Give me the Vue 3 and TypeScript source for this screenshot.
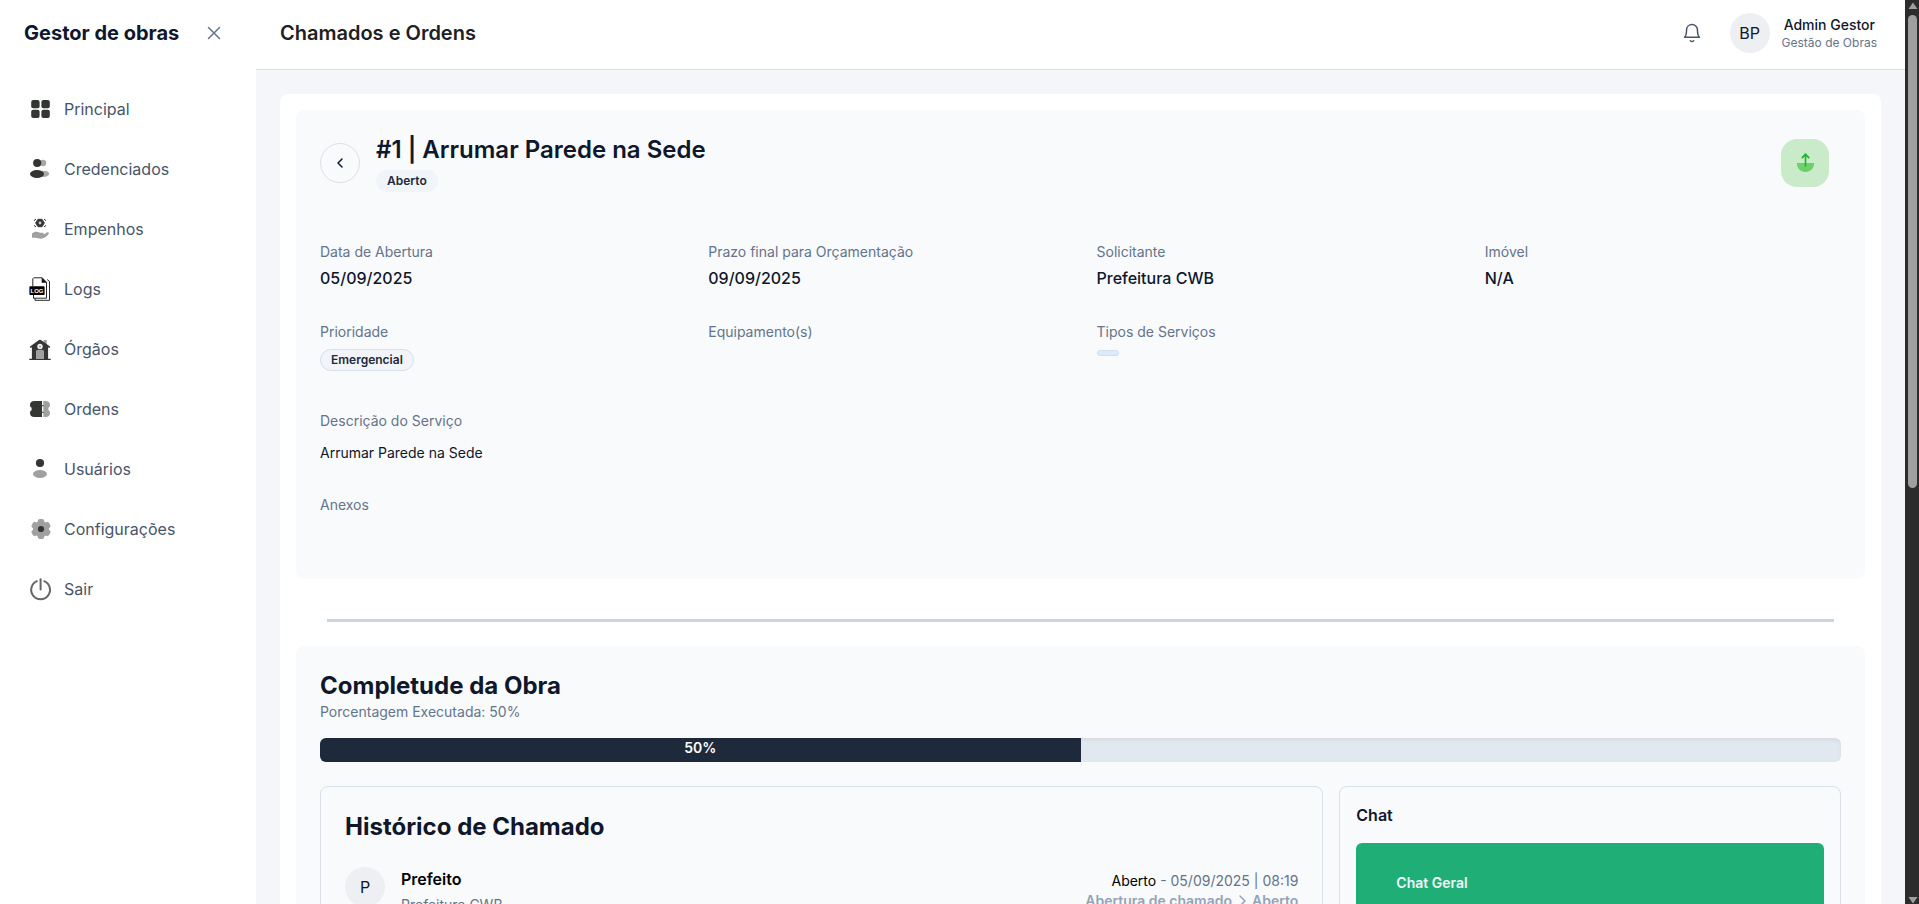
<script setup lang="ts">
import { ref } from 'vue'

interface NavItem {
  icon: string
  label: string
}

interface Field {
  label: string
  value?: string
  badge?: string
  chip?: boolean
}

const navItems: NavItem[] = [
  { icon: 'grid', label: 'Principal' },
  { icon: 'people', label: 'Credenciados' },
  { icon: 'hand', label: 'Empenhos' },
  { icon: 'log', label: 'Logs' },
  { icon: 'house', label: 'Órgãos' },
  { icon: 'ticket', label: 'Ordens' },
  { icon: 'user', label: 'Usuários' },
  { icon: 'gear', label: 'Configurações' },
  { icon: 'power', label: 'Sair' },
]

const fields: Field[] = [
  { label: 'Data de Abertura', value: '05/09/2025' },
  { label: 'Prazo final para Orçamentação', value: '09/09/2025' },
  { label: 'Solicitante', value: 'Prefeitura CWB' },
  { label: 'Imóvel', value: 'N/A' },
  { label: 'Prioridade', badge: 'Emergencial' },
  { label: 'Equipamento(s)' },
  { label: 'Tipos de Serviços', chip: true },
]

const progress = ref<number>(50)
const gearAngles: number[] = [0, 60, 120, 180, 240, 300]
</script>

<template>
  <div class="shell">
    <aside class="sidebar">
      <div class="brand">
        <span class="brand-name">Gestor de obras</span>
        <button class="icon-button" type="button" aria-label="Fechar menu">
          <svg width="14" height="14" viewBox="0 0 14 14" fill="none" stroke="#64748b" stroke-width="1.5" stroke-linecap="round">
            <path d="M1.5 1.5 12.5 12.5M12.5 1.5 1.5 12.5" />
          </svg>
        </button>
      </div>
      <nav class="nav">
        <a v-for="item in navItems" :key="item.label" class="nav-link" href="#">
          <svg class="nav-icon" viewBox="0 0 24 24" fill="none" aria-hidden="true">
            <g v-if="item.icon === 'grid'" fill="#343633">
              <rect x="3.2" y="3" width="8.4" height="8.2" rx="2" />
              <rect x="13.4" y="3" width="8.4" height="8.2" rx="2" />
              <rect x="3.2" y="12.8" width="8.4" height="8.2" rx="2" />
              <rect x="13.4" y="12.8" width="8.4" height="8.2" rx="2" />
            </g>
            <g v-else-if="item.icon === 'people'">
              <circle cx="15" cy="6" r="3.2" fill="#a8a8a8" />
              <ellipse cx="15.4" cy="16.8" rx="5.8" ry="3.1" fill="#a8a8a8" />
              <circle cx="9.2" cy="6" r="4.1" fill="#343633" />
              <ellipse cx="9" cy="17" rx="7" ry="4" fill="#343633" />
            </g>
            <g v-else-if="item.icon === 'hand'">
              <path d="M10 2.300h4l2.300 3.700-2.300 3.700h-4L7.700 6z" fill="#343633" stroke="#343633" stroke-width="1" stroke-linejoin="round" />
              <circle cx="12" cy="6" r="1.4" fill="#c9c9c9" />
              <path d="M8 2.3Q6.4 2.5 6.4 3.8M16 2.3q1.6.2 1.6 1.5M8 9.7Q6.4 9.5 6.4 8.2M16 9.7q1.6-.2 1.6-1.5" stroke="#343633" stroke-width="1" />
              <path d="M4 16.6c2.2-2.2 5-2.4 7.4-1 1 .5 2.6 0 3.6.4.8.3 1 .9.8 1.5l3-1.9c1.4-.8 2.8.2 1.8 1.5-1.8 2.6-4.4 4.6-8 4.6-2.2 0-3-.9-5-.9H4z" fill="#a0a0a0" />
            </g>
            <g v-else-if="item.icon === 'log'">
              <path d="M7 18v5.3h14.500V4.400l-2.300-1.900" stroke="#111" stroke-width=".9" stroke-linejoin="round" />
              <path d="M5.500 18v3.200h13V5.200L14.200.8H5.800L4.800 1.800v7.500" fill="#fff" stroke="#111" stroke-width=".9" stroke-linejoin="round" />
              <path d="M13.700.6v5.200h5.200z" fill="#111" />
              <rect x="1.400" y="9.200" width="15.200" height="8.800" rx=".8" fill="#000" />
              <text class="log-text" x="9" y="15.900" text-anchor="middle">LOG</text>
            </g>
            <g v-else-if="item.icon === 'house'">
              <path d="M15.6 3h3.2v6h-3.2z" fill="#a0a0a0" />
              <path d="M12 2.8c.5 0 .9.2 1.3.5l9 6.5-.9 1.2-1.3-.8v11.6h2.6v1.2H1.3v-1.2h2.6V10.2L2.6 11l-.9-1.2 9-6.5c.4-.3.8-.5 1.3-.5z" fill="#343633" />
              <circle cx="12" cy="9.4" r="2.7" fill="#f1f1f1" />
              <circle cx="12" cy="9.4" r="1" fill="#a0a0a0" />
              <path d="M8 22v-7.4c0-1 .8-1.8 1.8-1.8h4.4c1 0 1.8.8 1.8 1.8V22z" fill="#a0a0a0" />
            </g>
            <g v-else-if="item.icon === 'ticket'">
              <path d="M15 4h2.600C20.400 4 22 5.200 22 8c0 1.500-.6 2.300-1.600 2.800v2.400c1 .5 1.600 1.300 1.600 2.800 0 2.800-1.600 4-4.400 4H15z" fill="#a0a0a0" />
              <path d="M14.200 4H6.400C3.600 4 2 5.200 2 8c0 1.500.5 2.300 1.600 2.800v2.400C2.500 13.700 2 14.500 2 16c0 2.800 1.600 4 4.400 4h7.800z" fill="#343633" />
              <path d="M14.700 4v16" stroke="#fff" stroke-width="1.200" />
              <path d="M13.600 8.700h2.200M13.600 15.300h2.200" stroke="#5c5c5c" stroke-width="1.200" />
            </g>
            <g v-else-if="item.icon === 'user'">
              <circle cx="12" cy="6" r="4.1" fill="#343633" />
              <ellipse cx="12" cy="17" rx="7" ry="4" fill="#a0a0a0" />
            </g>
            <g v-else-if="item.icon === 'gear'">
              <circle cx="13" cy="12" r="8" fill="#a0a0a0" />
              <rect
                v-for="angle in gearAngles"
                :key="angle"
                x="9.800"
                y="2"
                width="6.400"
                height="5"
                rx="2"
                fill="#a0a0a0"
                :transform="`rotate(${angle} 13 12)`"
              />
              <circle cx="13" cy="12" r="3.100" fill="#343633" />
            </g>
            <g v-else stroke="#666" stroke-width="2" stroke-linecap="round">
              <path d="M8.900 4.200a9.400 9.400 0 1 0 7.400 0" />
              <path d="M12.600 2.200v10.400" />
            </g>
          </svg>
          <span>{{ item.label }}</span>
        </a>
      </nav>
    </aside>

    <div class="content">
      <header class="topbar">
        <h1 class="page-title">Chamados e Ordens</h1>
        <div class="account">
          <button class="icon-button" type="button" aria-label="Notificações">
            <svg width="24" height="24" viewBox="0 0 24 24" fill="none" stroke="#475569" stroke-width="1.5" stroke-linecap="round" stroke-linejoin="round">
              <path d="M4.600 16.200h14.800c-1.300-1.300-1.900-3.200-1.900-5.700V9.200C17.500 6 15.200 3.600 12 3.600S6.500 6 6.500 9.200v1.300c0 2.500-.6 4.400-1.900 5.700z" />
              <path d="M10.300 19.700q1.700 1.500 3.400 0" />
            </svg>
          </button>
          <div class="profile">
            <span class="avatar">BP</span>
            <div class="profile-text">
              <span class="profile-name">Admin Gestor</span>
              <span class="profile-org">Gestão de Obras</span>
            </div>
          </div>
        </div>
      </header>

      <main class="main">
        <div class="sheet">
          <section class="card details">
            <div class="details-head">
              <button class="back" type="button" aria-label="Voltar">
                <svg width="16" height="16" viewBox="0 0 16 16" fill="none" stroke="#0f172a" stroke-width="1.5" stroke-linecap="round" stroke-linejoin="round">
                  <path d="M10 4 6 8l4 4" />
                </svg>
              </button>
              <div class="details-title">
                <h2>#1 | Arrumar Parede na Sede</h2>
                <span class="badge badge-plain">Aberto</span>
              </div>
              <button class="upload" type="button" aria-label="Enviar">
                <svg width="24" height="24" viewBox="0 0 24 24" fill="none">
                  <path d="M3.800 12h17.400c0 5.200-3.500 8.900-8.700 8.900S3.800 17.200 3.800 12z" fill="#6fd06b" />
                  <path d="M12.500 15V3.600M9.300 6.600l3.200-3.400 3.200 3.400" stroke="#22b52a" stroke-width="1.700" stroke-linecap="round" stroke-linejoin="round" />
                </svg>
              </button>
            </div>

            <dl class="fields">
              <div v-for="field in fields" :key="field.label" class="field">
                <dt>{{ field.label }}</dt>
                <dd v-if="field.value">{{ field.value }}</dd>
                <dd v-else-if="field.badge" class="tag"><span class="badge">{{ field.badge }}</span></dd>
                <dd v-else-if="field.chip" class="tag"><span class="chip"></span></dd>
              </div>
            </dl>

            <div class="block">
              <h3>Descrição do Serviço</h3>
              <p>Arrumar Parede na Sede</p>
            </div>
            <div class="block">
              <h3>Anexos</h3>
            </div>
          </section>

          <hr class="divider" />

          <section class="card">
            <h2 class="section-title">Completude da Obra</h2>
            <p class="section-note">Porcentagem Executada: {{ progress }}%</p>
            <div class="progress" role="progressbar" :aria-valuenow="progress" aria-valuemin="0" aria-valuemax="100">
              <div class="progress-fill" :style="{ width: progress + '%' }">{{ progress }}%</div>
            </div>

            <div class="panels">
              <section class="panel history">
                <h2 class="section-title">Histórico de Chamado</h2>
                <article class="event">
                  <span class="avatar">P</span>
                  <div class="event-who">
                    <strong>Prefeito</strong>
                    <span>Prefeitura CWB</span>
                  </div>
                  <div class="event-info">
                    <span><b>Aberto</b> - 05/09/2025 | 08:19</span>
                    <span class="event-change">
                      Abertura de chamado
                      <svg width="16" height="16" viewBox="0 0 16 16" fill="none" stroke="currentColor" stroke-width="1.500" stroke-linecap="round" stroke-linejoin="round">
                        <path d="M6 3l5 5-5 5" />
                      </svg>
                      Aberto
                    </span>
                  </div>
                </article>
              </section>

              <section class="panel chat">
                <h3>Chat</h3>
                <button class="chat-room" type="button">Chat Geral</button>
              </section>
            </div>
          </section>
        </div>
      </main>
    </div>

    <div class="scrollbar" aria-hidden="true">
      <svg width="10" height="7" viewBox="0 0 10 7"><path d="M5 .5 9.500 7h-9z" fill="#9f9f9f" /></svg>
      <span class="track"><span class="thumb"></span></span>
      <svg width="10" height="7" viewBox="0 0 10 7"><path d="M5 6.500.5 0h9z" fill="#9f9f9f" /></svg>
    </div>
  </div>
</template>

<style>
body {
  background: #fff;
}
</style>

<style scoped>
.shell,
.shell * {
  box-sizing: border-box;
}

.shell {
  display: flex;
  height: 100vh;
  overflow: hidden;
  background: #fff;
  color: #0f172a;
  font-family: Inter, "Liberation Sans", sans-serif;
  font-size: 16px;
  line-height: 24px;
}

h1,
h2,
h3,
p,
dl,
dd {
  margin: 0;
}

button {
  padding: 0;
  border: 0;
  background: none;
  font: inherit;
  cursor: pointer;
}

svg {
  display: block;
}

.icon-button {
  display: flex;
}

/* Sidebar */
.sidebar {
  flex: 0 0 256px;
  background: #fff;
}

.brand {
  display: flex;
  align-items: center;
  justify-content: space-between;
  height: 66px;
  padding: 0 35px 0 24px;
}

.brand-name {
  font-size: 20px;
  font-weight: 700;
  line-height: 28px;
}

.nav {
  display: flex;
  flex-direction: column;
  padding: 13px 24px 0 28px;
}

.nav-link {
  display: flex;
  align-items: center;
  gap: 12px;
  height: 60px;
  color: #475569;
  text-decoration: none;
}

.nav-icon {
  width: 24px;
  height: 24px;
}

.log-text {
  fill: #fff;
  font-family: "Liberation Sans", sans-serif;
  font-size: 6px;
  font-weight: 700;
}

/* Top bar */
.content {
  flex: 1;
  min-width: 0;
  background: #f4f6fa;
}

.topbar {
  display: flex;
  align-items: center;
  justify-content: space-between;
  padding: 13px 28px 16px 24px;
  border-bottom: 1px solid #d9dee6;
  background: #fff;
}

.page-title {
  color: #1f2023;
  font-size: 20px;
  font-weight: 600;
  line-height: 28px;
}

.account {
  display: flex;
  align-items: center;
  gap: 26px;
}

.profile {
  display: flex;
  align-items: center;
  gap: 12px;
}

.avatar {
  display: flex;
  flex: none;
  align-items: center;
  justify-content: center;
  width: 40px;
  height: 40px;
  border-radius: 50%;
  background: #edeff3;
}

.profile-text {
  display: flex;
  flex-direction: column;
  align-items: center;
}

.profile-name {
  font-size: 14px;
  font-weight: 500;
  line-height: 20px;
}

.profile-org {
  color: #64748b;
  font-size: 12px;
  line-height: 16px;
}

/* Page */
.main {
  padding: 24px;
}

.sheet {
  padding: 16px;
  border-radius: 8px;
  background: #fff;
}

.card {
  padding: 24px;
  border-radius: 8px;
  background: #f8fafc;
}

.details {
  padding-bottom: 64px;
}

.details-head {
  display: flex;
  align-items: center;
  gap: 16px;
  padding-right: 12px;
}

.back {
  display: flex;
  align-items: center;
  justify-content: center;
  width: 40px;
  height: 40px;
  border: 1px solid #dcdfe8;
  border-radius: 50%;
}

.details-title {
  display: flex;
  flex: 1;
  flex-direction: column;
  align-items: flex-start;
  gap: 4px;
}

.details-title h2 {
  font-size: 24px;
  font-weight: 600;
  line-height: 32px;
}

.badge {
  display: inline-flex;
  align-items: center;
  height: 22px;
  padding: 0 10px;
  border: 1px solid #d9e0ea;
  border-radius: 11px;
  background: #f1f5f9;
  color: #1e293b;
  font-size: 12px;
  font-weight: 600;
  line-height: 16px;
}

.badge-plain {
  border-color: transparent;
}

.upload {
  display: flex;
  align-items: center;
  justify-content: center;
  width: 48px;
  height: 48px;
  border-radius: 16px;
  background: #c9ebca;
}

.fields {
  display: grid;
  grid-template-columns: repeat(4, 1fr);
  gap: 32px;
  padding: 50px 0 40px;
}

.field dt,
.block h3 {
  color: #64748b;
  font-size: 14px;
  font-weight: 400;
  line-height: 20px;
}

.field dd {
  margin-top: 4px;
  font-weight: 500;
}

.field .tag {
  display: flex;
  margin-top: 7px;
}

.chip {
  width: 22px;
  height: 6px;
  margin-top: 1px;
  border: 1px solid #d3dfee;
  border-radius: 3px;
  background: #dbeafe;
}

.block + .block {
  margin-top: 32px;
}

.block p {
  margin-top: 12px;
  font-size: 14px;
  line-height: 20px;
}

.divider {
  width: 96%;
  height: 3px;
  margin: 40px auto 24px;
  border: 0;
  background: #cbd5e1;
}

.section-title {
  font-size: 24px;
  font-weight: 700;
  line-height: 32px;
}

.section-note {
  color: #64748b;
  font-size: 14px;
  line-height: 20px;
}

.progress {
  height: 24px;
  margin-top: 16px;
  overflow: hidden;
  border-radius: 6px;
  background: #e2e8f0;
  box-shadow: inset 0 2px 4px rgba(0, 0, 0, 0.06);
}

.progress-fill {
  height: 100%;
  background: #1e293b;
  color: #fff;
  font-size: 14px;
  font-weight: 600;
  line-height: 20px;
  text-align: center;
}

.panels {
  display: grid;
  grid-template-columns: 2fr 1fr;
  gap: 16px;
  margin-top: 24px;
}

.panel {
  border: 1px solid #d9e0ea;
  border-radius: 8px;
}

.history {
  padding: 24px;
}

.event {
  display: flex;
  gap: 16px;
  margin-top: 24px;
}

.event-who {
  display: flex;
  flex: 1;
  flex-direction: column;
}

.event-who strong {
  color: #000;
  font-weight: 600;
}

.event-who span {
  color: #64748b;
  font-size: 14px;
  line-height: 28px;
}

.event-info {
  display: flex;
  flex-direction: column;
  align-items: flex-end;
  padding-top: 4px;
  color: #64748b;
  font-size: 14px;
  line-height: 20px;
}

.event-info b {
  color: #000;
  font-weight: 400;
}

.event-change {
  display: flex;
  align-items: center;
  gap: 2px;
  color: #94a3b8;
  font-weight: 600;
}

.chat {
  padding: 16px;
}

.chat h3 {
  font-size: 16px;
  font-weight: 600;
  line-height: 24px;
}

.chat-room {
  display: block;
  width: 100%;
  margin-top: 16px;
  padding: 30px 40px;
  border-radius: 6px;
  background: #20ae77;
  color: #f1f5f9;
  font-size: 14px;
  font-weight: 600;
  line-height: 20px;
  text-align: left;
}

/* Scroll bar */
.scrollbar {
  display: flex;
  flex: 0 0 14px;
  flex-direction: column;
  align-items: center;
  gap: 6px;
  padding: 2px 0 0 1px;
  background: #2c2c2c;
}

.track {
  flex: 1;
}

.thumb {
  display: block;
  width: 9px;
  height: 54%;
  border-radius: 5px;
  background: #9f9f9f;
}
</style>
